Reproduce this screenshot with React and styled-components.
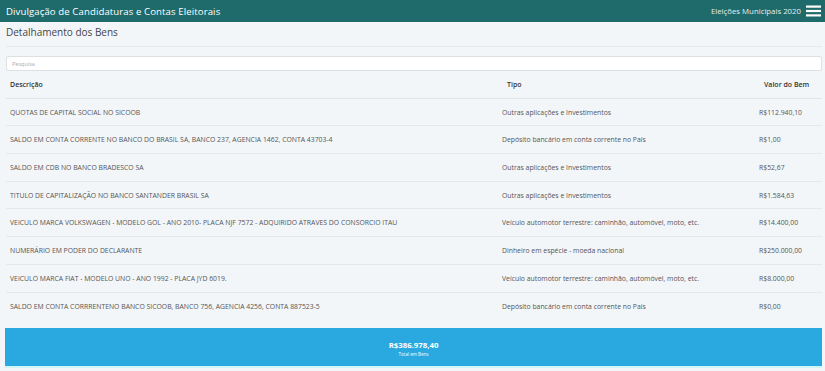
import React from "react";
import styled, { createGlobalStyle } from "styled-components";

const bens = [
  { descricao: "QUOTAS DE CAPITAL SOCIAL NO SICOOB", tipo: "Outras aplicações e Investimentos", valor: "R$112.940,10" },
  { descricao: "SALDO EM CONTA CORRENTE NO BANCO DO BRASIL SA, BANCO 237, AGENCIA 1462, CONTA 43703-4", tipo: "Depósito bancário em conta corrente no País", valor: "R$1,00" },
  { descricao: "SALDO EM CDB NO BANCO BRADESCO SA", tipo: "Outras aplicações e Investimentos", valor: "R$52,67" },
  { descricao: "TITULO DE CAPITALIZAÇÃO NO BANCO SANTANDER BRASIL SA", tipo: "Outras aplicações e Investimentos", valor: "R$1.584,63" },
  { descricao: "VEICULO MARCA VOLKSWAGEN - MODELO GOL - ANO 2010- PLACA NJF 7572 - ADQUIRIDO ATRAVES DO CONSORCIO ITAU", tipo: "Veículo automotor terrestre: caminhão, automóvel, moto, etc.", valor: "R$14.400,00" },
  { descricao: "NUMERÁRIO EM PODER DO DECLARANTE", tipo: "Dinheiro em espécie - moeda nacional", valor: "R$250.000,00" },
  { descricao: "VEICULO MARCA FIAT - MODELO UNO - ANO 1992 - PLACA JYD 6019.", tipo: "Veículo automotor terrestre: caminhão, automóvel, moto, etc.", valor: "R$8.000,00" },
  { descricao: "SALDO EM CONTA CORRRENTENO BANCO SICOOB, BANCO 756, AGENCIA 4256, CONTA 887523-5", tipo: "Depósito bancário em conta corrente no País", valor: "R$0,00" },
];

function MenuIcon() {
  return (
    <svg width="15" height="12" viewBox="0 0 15 12">
      <rect x="0" y="0.5" width="15" height="2.2" fill="#fff" />
      <rect x="0" y="4.9" width="15" height="2.2" fill="#fff" />
      <rect x="0" y="9.3" width="15" height="2.2" fill="#fff" />
    </svg>
  );
}

export default function App() {
  return (
    <>
      <GlobalStyle />
      <TopBar>
        <Brand>Divulgação de Candidaturas e Contas Eleitorais</Brand>
        <TopRight>
          <Election>Eleições Municipais 2020</Election>
          <MenuIcon />
        </TopRight>
      </TopBar>
      <Main>
        <PageTitle>Detalhamento dos Bens</PageTitle>
        <Search placeholder="Pesquisa" />
        <Table>
          <HeadRow>
            <HeadCell>Descrição</HeadCell>
            <HeadCell $shift>Tipo</HeadCell>
            <HeadCell $shift>Valor do Bem</HeadCell>
          </HeadRow>
          {bens.map((bem, i) => (
            <Row key={i} $last={i === bens.length - 1}>
              <Cell>{bem.descricao}</Cell>
              <Cell>{bem.tipo}</Cell>
              <Cell>{bem.valor}</Cell>
            </Row>
          ))}
        </Table>
        <TotalBox>
          <TotalValue>R$386.978,40</TotalValue>
          <TotalLabel>Total em Bens</TotalLabel>
        </TotalBox>
      </Main>
    </>
  );
}

const GlobalStyle = createGlobalStyle`
  body {
    margin: 0;
    background-color: #f3f6f9;
    font-family: "Open Sans", "Noto Sans", sans-serif;
    color: #4a4a4a;
  }
`;

const TopBar = styled.header`
  height: 22px;
  background-color: #1f6a6b;
  display: flex;
  align-items: center;
  justify-content: space-between;
  padding: 0 4px 0 6px;
`;

const Brand = styled.div`
  color: #fff;
  font-size: 9.6px;
  letter-spacing: 0.1px;
`;

const TopRight = styled.div`
  display: flex;
  align-items: center;
  gap: 5px;
`;

const Election = styled.span`
  color: #e4efef;
  font-size: 7.8px;
`;

const Main = styled.main`
  padding: 0 3px 0 6px;
`;

const PageTitle = styled.h1`
  margin: 0;
  height: 25px;
  box-sizing: border-box;
  padding-top: 3px;
  font-size: 10px;
  font-weight: 400;
  color: #454545;
  border-bottom: 1px solid #e6e9ec;
`;

const Search = styled.input`
  display: block;
  box-sizing: border-box;
  width: 100%;
  height: 15px;
  margin-top: 9px;
  padding: 0 5px;
  border: 1px solid #dde1e4;
  border-radius: 2px;
  background: #fff;
  font-family: inherit;
  font-size: 5.5px;
  &::placeholder {
    color: #a9adb0;
  }
`;

const Table = styled.div`
  display: grid;
  grid-template-columns: 492px 257px 1fr;
  grid-auto-rows: 27.7px;
`;

const HeadRow = styled.div`
  display: contents;
`;

const HeadCell = styled.div`
  display: flex;
  align-items: center;
  padding: 1px 0 0 ${(p) => (p.$shift ? "9px" : "4px")};
  font-size: 7px;
  font-weight: 600;
  color: #333;
  border-bottom: 1px solid #e3e6e9;
`;

const Row = styled.div`
  display: contents;
  & > div {
    border-bottom: ${(p) => (p.$last ? "none" : "1px solid #e6e9ec")};
  }
`;

const Cell = styled.div`
  display: flex;
  align-items: center;
  padding-left: 4px;
  font-size: 6.85px;
  color: #555;
  white-space: nowrap;
`;

const TotalBox = styled.div`
  margin: 8px 0 0 -1px;
  height: 40px;
  box-sizing: border-box;
  background-color: #2aa9e0;
  border-bottom: 2px solid #cff5f9;
  display: flex;
  flex-direction: column;
  align-items: center;
  justify-content: center;
  color: #fff;
`;

const TotalValue = styled.div`
  font-size: 7.8px;
  font-weight: 700;
  margin-top: 2px;
`;

const TotalLabel = styled.div`
  font-size: 4.5px;
  margin-top: 1px;
`;
